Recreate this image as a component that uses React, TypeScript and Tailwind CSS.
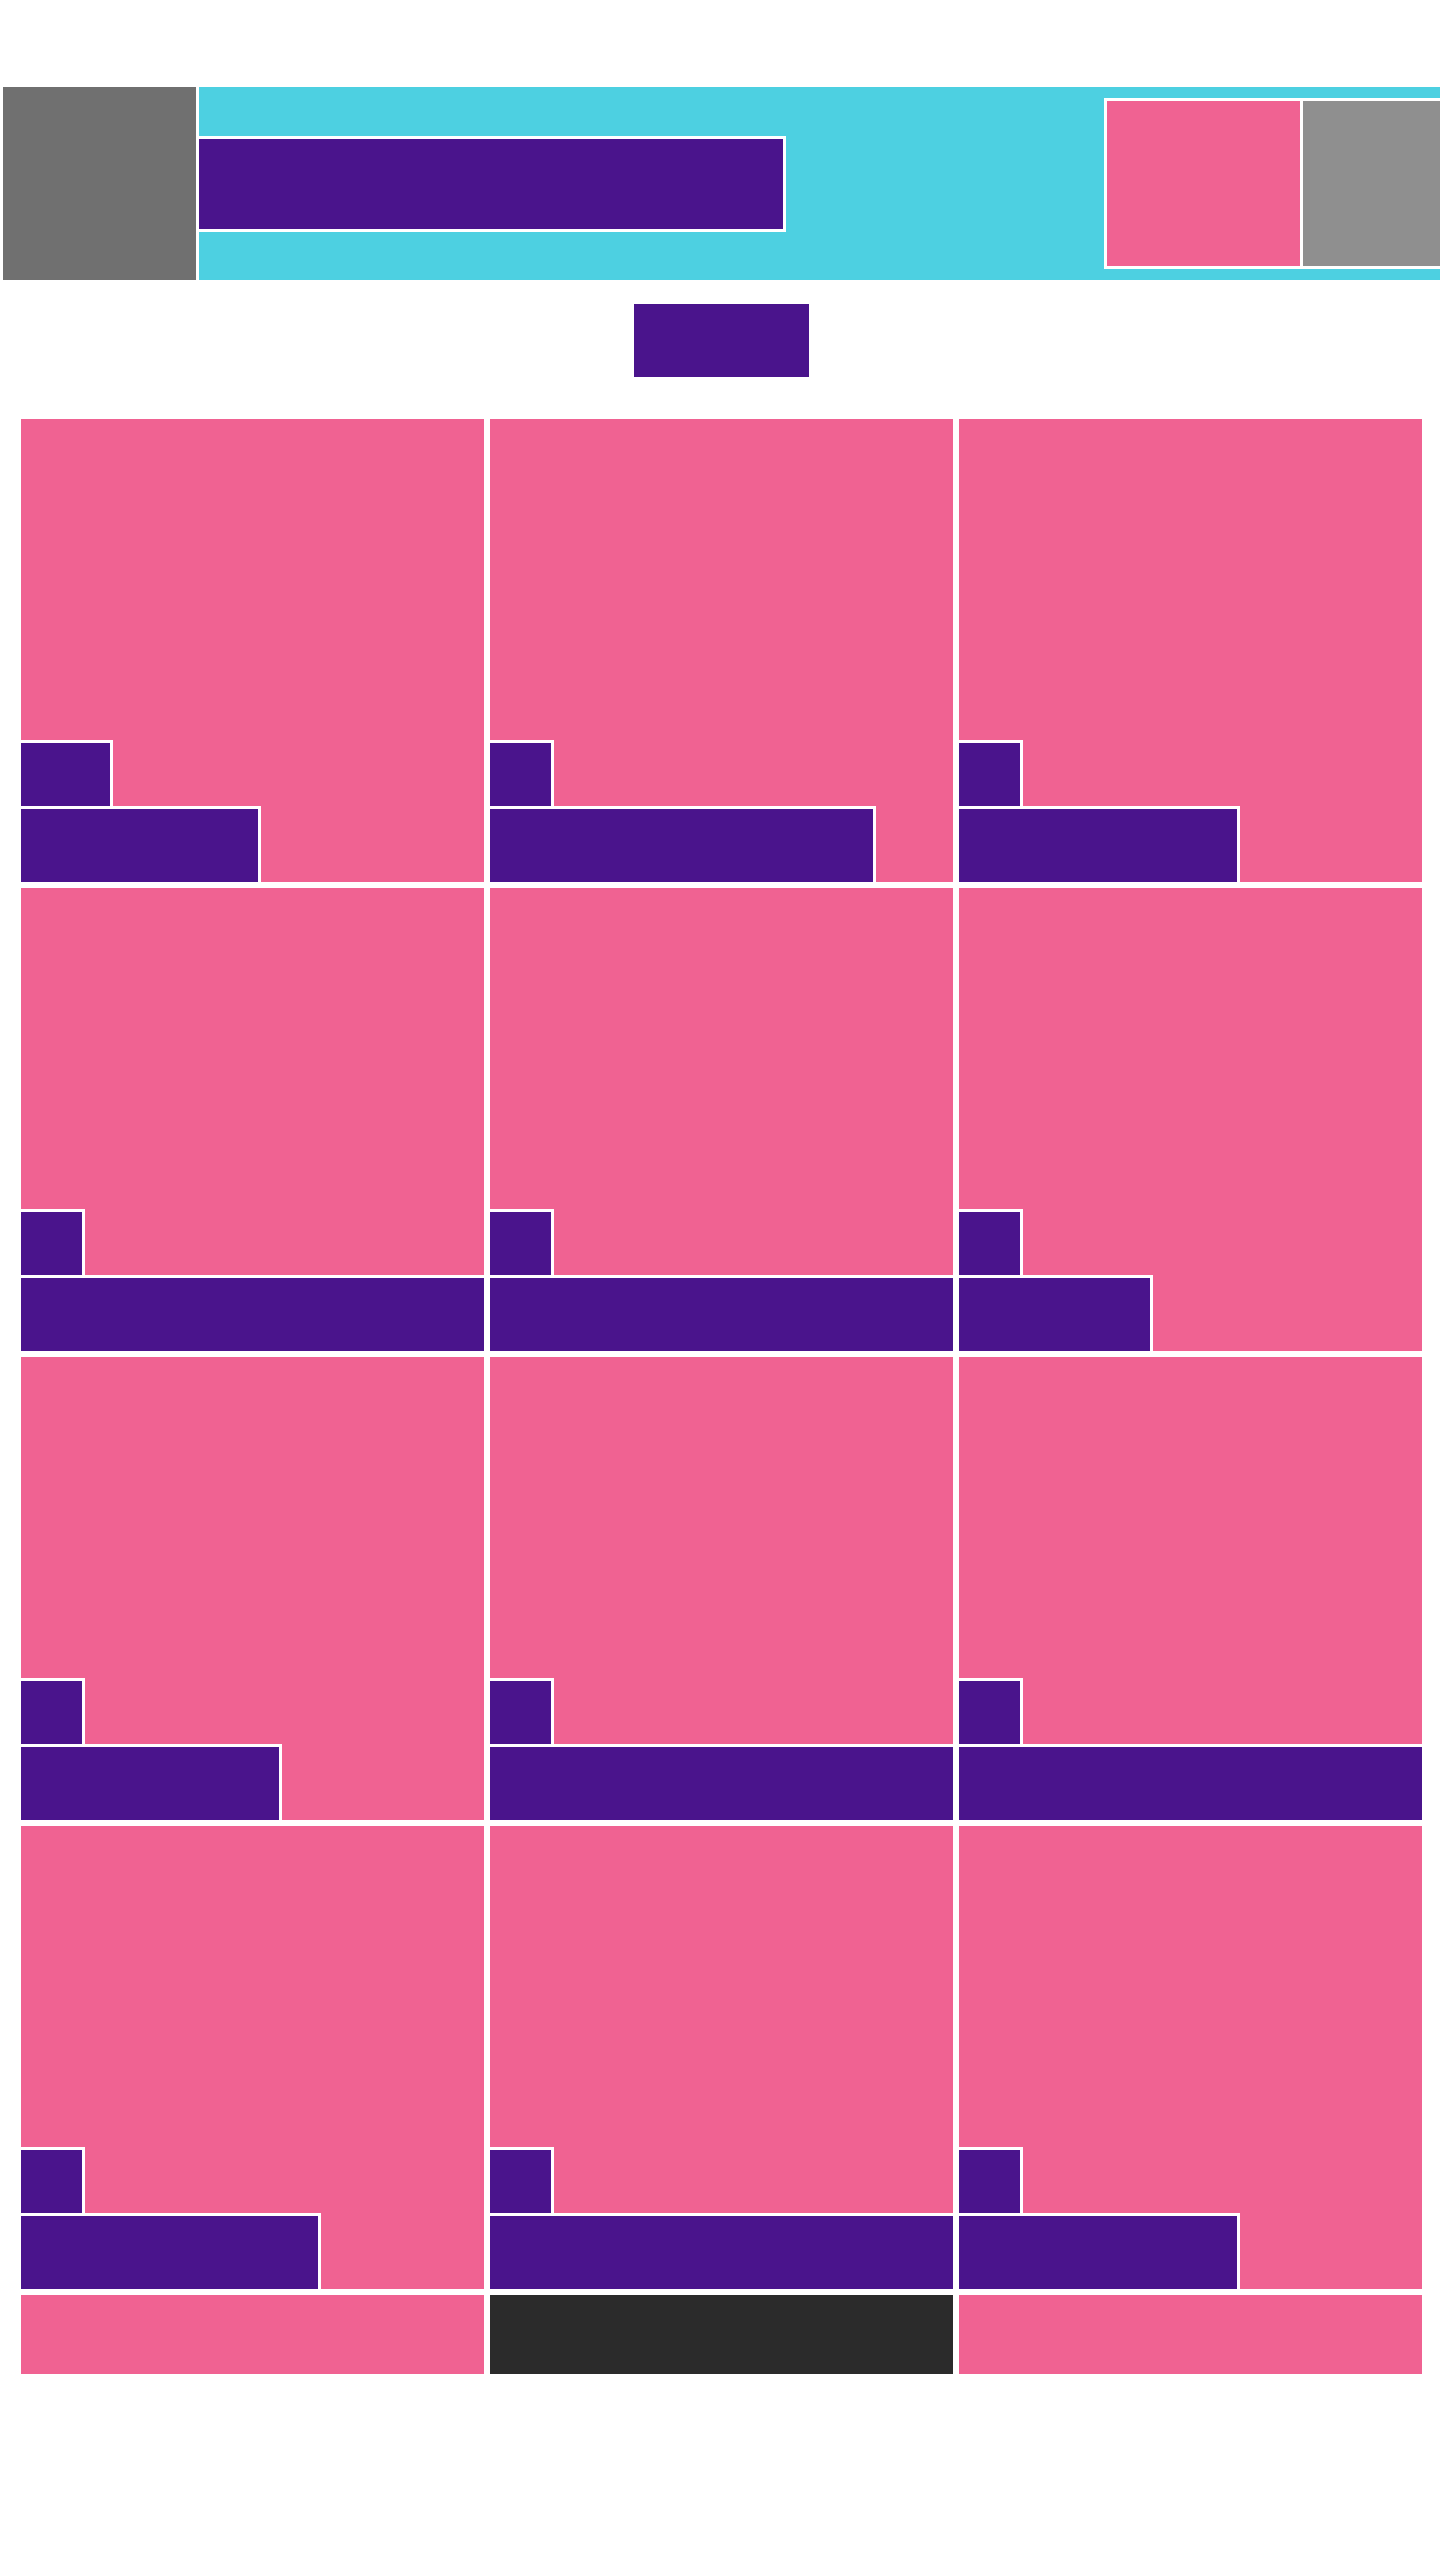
type Tile = {
  small: number;
  big: number | "full";
};

// widths include the 3px white right border
const tiles: Tile[] = [
  { small: 92, big: 240 },
  { small: 64, big: 386 },
  { small: 64, big: 281 },
  { small: 64, big: "full" },
  { small: 64, big: "full" },
  { small: 64, big: 194 },
  { small: 64, big: 261 },
  { small: 64, big: "full" },
  { small: 64, big: "full" },
  { small: 64, big: 300 },
  { small: 64, big: "full" },
  { small: 64, big: 281 },
];

function Card({ tile }: { tile: Tile }) {
  return (
    <div className="flex h-[469px] flex-col justify-end border-[3px] border-white bg-[#f06292]">
      <div
        className="h-[66px] border-t-[3px] border-r-[3px] border-white bg-[#4a148c]"
        style={{ width: tile.small }}
      />
      {tile.big === "full" ? (
        <div className="h-[76px] w-full border-t-[3px] border-white bg-[#4a148c]" />
      ) : (
        <div
          className="h-[76px] border-t-[3px] border-r-[3px] border-white bg-[#4a148c]"
          style={{ width: tile.big }}
        />
      )}
    </div>
  );
}

export default function App() {
  return (
    <div className="min-h-screen bg-white pt-[87px]">
      {/* header */}
      <header className="flex h-[193px] items-center overflow-hidden bg-[#4dd0e1]">
        <div className="h-full w-[199px] shrink-0 border-x-[3px] border-white bg-[#707070]" />
        <div className="h-[96px] w-[587px] shrink-0 border-y-[3px] border-r-[3px] border-white bg-[#4a148c]" />
        <div className="ml-[318px] flex h-[171px] shrink-0 gap-[3px] bg-white p-[3px]">
          <div className="h-full w-[193px] bg-[#f06292]" />
          <div className="h-full w-[193px] bg-[#8f8f8f]" />
        </div>
      </header>

      <div className="mt-[24px] flex justify-center pl-[3px]">
        <button className="h-[73px] w-[175px] bg-[#4a148c]" />
      </div>

      <main className="mt-[39px] grid grid-cols-[repeat(3,469px)] pl-[18px]">
        {tiles.map((t, i) => (
          <Card key={i} tile={t} />
        ))}
        <div className="h-[85px] border-[3px] border-white bg-[#f06292]" />
        <div className="h-[85px] border-[3px] border-white bg-[#2b2b2b]" />
        <div className="h-[85px] border-[3px] border-white bg-[#f06292]" />
      </main>
    </div>
  );
}
